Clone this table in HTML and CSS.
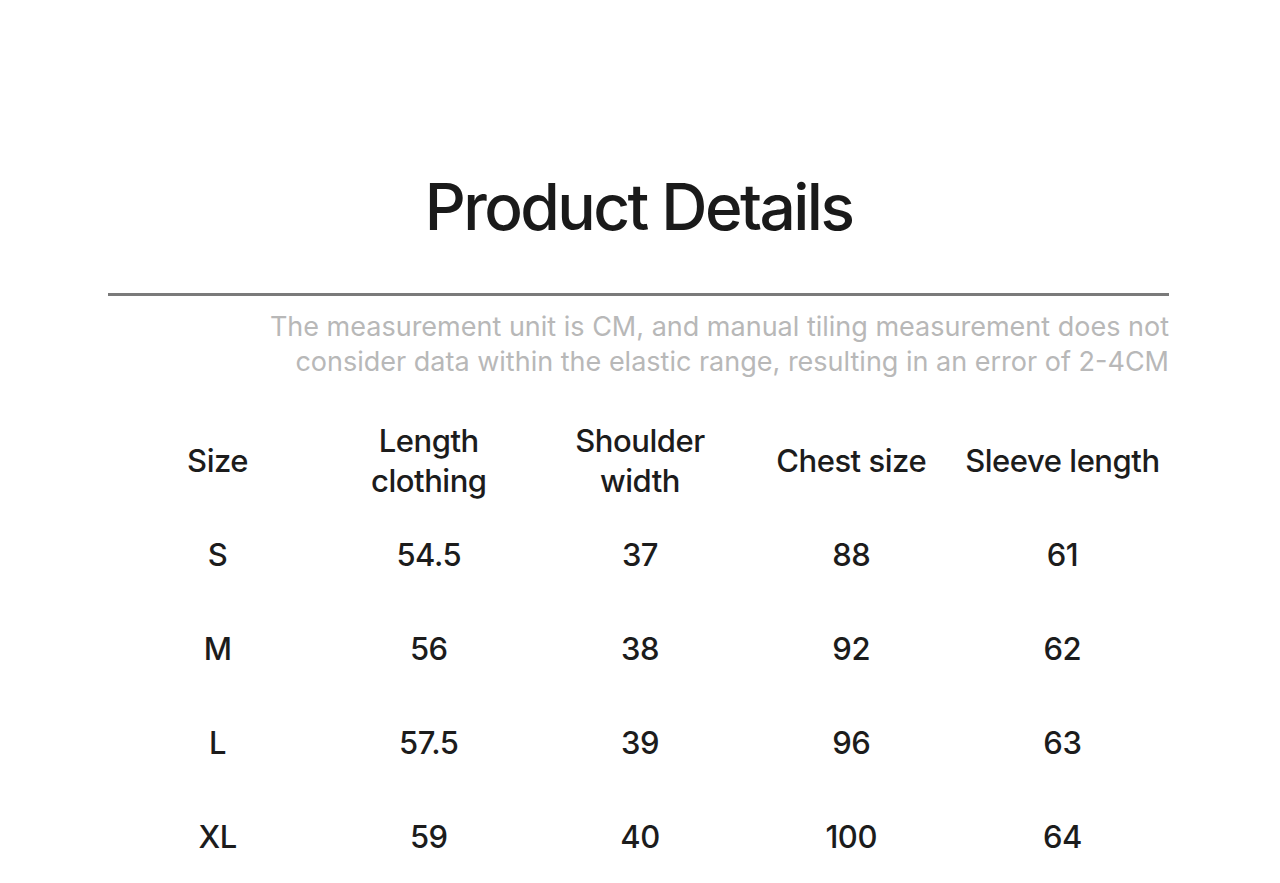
FILE: index.html
```html
<!DOCTYPE html>
<html lang="en">
<head>
<meta charset="utf-8">
<title>Product Details</title>
<link rel="stylesheet" href="styles.css">
</head>
<body>
<main class="page">
  <h1 class="title">Product Details</h1>
  <hr class="rule">
  <p class="note">The measurement unit is CM, and manual tiling measurement does not<br>consider data within the elastic range, resulting in an error of 2-4CM</p>
  <div class="table">
    <div class="cell head">Size</div>
    <div class="cell head">Length<br>clothing</div>
    <div class="cell head">Shoulder<br>width</div>
    <div class="cell head">Chest size</div>
    <div class="cell head">Sleeve length</div>

    <div class="cell">S</div><div class="cell">54.5</div><div class="cell">37</div><div class="cell">88</div><div class="cell">61</div>
    <div class="cell">M</div><div class="cell">56</div><div class="cell">38</div><div class="cell">92</div><div class="cell">62</div>
    <div class="cell">L</div><div class="cell">57.5</div><div class="cell">39</div><div class="cell">96</div><div class="cell">63</div>
    <div class="cell">XL</div><div class="cell">59</div><div class="cell">40</div><div class="cell">100</div><div class="cell">64</div>
  </div>
</main>
</body>
</html>
```
FILE: styles.css
```css
html, body {
  margin: 0;
  padding: 0;
  background: #ffffff;
}
body {
  font-family: Inter, "Liberation Sans", Arial, sans-serif;
  color: #1c1c1c;
}
.page {
  width: 1061px;
  margin-left: 108px;
  padding-top: 175px;
}
.title {
  margin: 0;
  text-align: center;
  font-size: 64px;
  line-height: 64px;
  font-weight: 500;
  letter-spacing: -0.04em;
  color: #1a1a1a;
}
.rule {
  margin: 54px 0 0 0;
  border: 0;
  height: 3px;
  background: #7a7a7a;
}
.note {
  margin: 13px 0 0 0;
  text-align: right;
  font-size: 27px;
  line-height: 35px;
  letter-spacing: 0;
  color: #b8b8b8;
}
.table {
  margin-top: 35px;
  margin-left: 4px;
  width: 1056px;
  display: grid;
  grid-template-columns: repeat(5, 1fr);
  grid-auto-rows: 94px;
}
.cell {
  display: flex;
  align-items: center;
  justify-content: center;
  text-align: center;
  font-size: 31px;
  line-height: 40px;
  font-weight: 500;
  letter-spacing: -0.015em;
  color: #1c1c1c;
}
```
